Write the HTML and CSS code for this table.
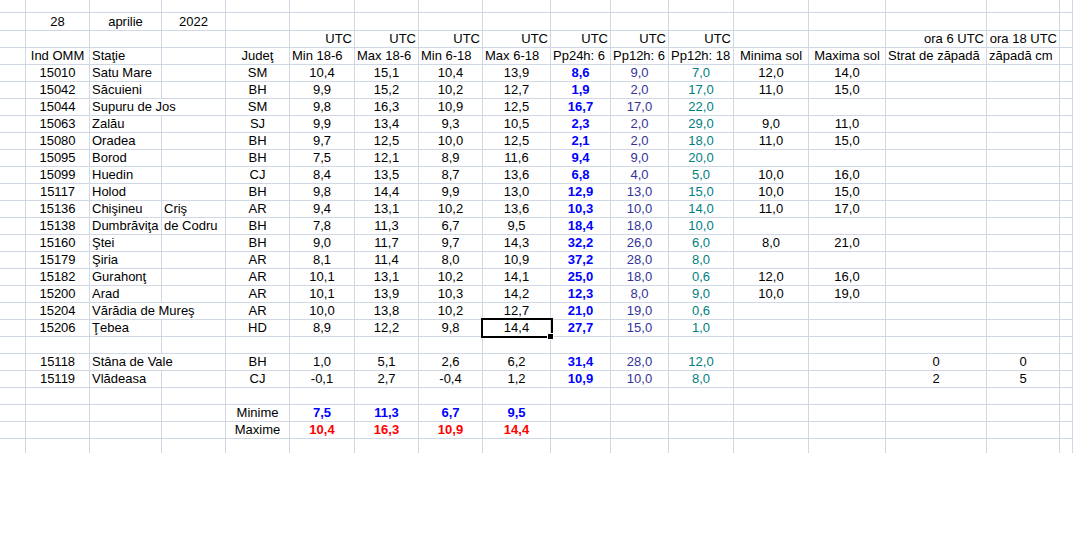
FILE: index.html
```html
<!DOCTYPE html>
<html lang="ro">
<head>
<meta charset="utf-8">
<title>Temperaturi 28 aprilie 2022</title>
<link rel="stylesheet" href="styles.css">
</head>
<body>
<div class="sheet">
  <!-- row 0 -->
  <div class="c"></div><div class="c"></div><div class="c"></div><div class="c"></div><div class="c"></div><div class="c"></div><div class="c"></div><div class="c"></div><div class="c"></div><div class="c"></div><div class="c"></div><div class="c"></div><div class="c"></div><div class="c"></div><div class="c"></div><div class="c"></div><div class="c"></div>
  <!-- row 1 -->
  <div class="c"></div><div class="c">28</div><div class="c">aprilie</div><div class="c">2022</div><div class="c"></div><div class="c"></div><div class="c"></div><div class="c"></div><div class="c"></div><div class="c"></div><div class="c"></div><div class="c"></div><div class="c"></div><div class="c"></div><div class="c"></div><div class="c"></div><div class="c"></div>
  <!-- row 2 -->
  <div class="c"></div><div class="c"></div><div class="c"></div><div class="c"></div><div class="c"></div><div class="c r">UTC</div><div class="c r">UTC</div><div class="c r">UTC</div><div class="c r">UTC</div><div class="c r">UTC</div><div class="c r">UTC</div><div class="c r">UTC</div><div class="c"></div><div class="c"></div><div class="c r">ora 6 UTC</div><div class="c r">ora 18 UTC</div><div class="c"></div>
  <!-- row 3 -->
  <div class="c"></div><div class="c">Ind OMM</div><div class="c l">Staţie</div><div class="c"></div><div class="c">Judeţ</div><div class="c l">Min 18-6</div><div class="c l">Max 18-6</div><div class="c l">Min 6-18</div><div class="c l">Max 6-18</div><div class="c l">Pp24h: 6</div><div class="c l">Pp12h: 6</div><div class="c l">Pp12h: 18</div><div class="c">Minima sol</div><div class="c">Maxima sol</div><div class="c l">Strat de zăpadă</div><div class="c l">zăpadă cm</div><div class="c"></div>
  <!-- 15010 -->
  <div class="c"></div><div class="c">15010</div><div class="c l">Satu Mare</div><div class="c"></div><div class="c">SM</div><div class="c">10,4</div><div class="c">15,1</div><div class="c">10,4</div><div class="c">13,9</div><div class="c b">8,6</div><div class="c p">9,0</div><div class="c t">7,0</div><div class="c">12,0</div><div class="c">14,0</div><div class="c"></div><div class="c"></div><div class="c"></div>
  <!-- 15042 -->
  <div class="c"></div><div class="c">15042</div><div class="c l">Săcuieni</div><div class="c"></div><div class="c">BH</div><div class="c">9,9</div><div class="c">15,2</div><div class="c">10,2</div><div class="c">12,7</div><div class="c b">1,9</div><div class="c p">2,0</div><div class="c t">17,0</div><div class="c">11,0</div><div class="c">15,0</div><div class="c"></div><div class="c"></div><div class="c"></div>
  <!-- 15044 -->
  <div class="c"></div><div class="c">15044</div><div class="c l s2">Supuru de Jos</div><div class="c">SM</div><div class="c">9,8</div><div class="c">16,3</div><div class="c">10,9</div><div class="c">12,5</div><div class="c b">16,7</div><div class="c p">17,0</div><div class="c t">22,0</div><div class="c"></div><div class="c"></div><div class="c"></div><div class="c"></div><div class="c"></div>
  <!-- 15063 -->
  <div class="c"></div><div class="c">15063</div><div class="c l">Zalău</div><div class="c"></div><div class="c">SJ</div><div class="c">9,9</div><div class="c">13,4</div><div class="c">9,3</div><div class="c">10,5</div><div class="c b">2,3</div><div class="c p">2,0</div><div class="c t">29,0</div><div class="c">9,0</div><div class="c">11,0</div><div class="c"></div><div class="c"></div><div class="c"></div>
  <!-- 15080 -->
  <div class="c"></div><div class="c">15080</div><div class="c l">Oradea</div><div class="c"></div><div class="c">BH</div><div class="c">9,7</div><div class="c">12,5</div><div class="c">10,0</div><div class="c">12,5</div><div class="c b">2,1</div><div class="c p">2,0</div><div class="c t">18,0</div><div class="c">11,0</div><div class="c">15,0</div><div class="c"></div><div class="c"></div><div class="c"></div>
  <!-- 15095 -->
  <div class="c"></div><div class="c">15095</div><div class="c l">Borod</div><div class="c"></div><div class="c">BH</div><div class="c">7,5</div><div class="c">12,1</div><div class="c">8,9</div><div class="c">11,6</div><div class="c b">9,4</div><div class="c p">9,0</div><div class="c t">20,0</div><div class="c"></div><div class="c"></div><div class="c"></div><div class="c"></div><div class="c"></div>
  <!-- 15099 -->
  <div class="c"></div><div class="c">15099</div><div class="c l">Huedin</div><div class="c"></div><div class="c">CJ</div><div class="c">8,4</div><div class="c">13,5</div><div class="c">8,7</div><div class="c">13,6</div><div class="c b">6,8</div><div class="c p">4,0</div><div class="c t">5,0</div><div class="c">10,0</div><div class="c">16,0</div><div class="c"></div><div class="c"></div><div class="c"></div>
  <!-- 15117 -->
  <div class="c"></div><div class="c">15117</div><div class="c l">Holod</div><div class="c"></div><div class="c">BH</div><div class="c">9,8</div><div class="c">14,4</div><div class="c">9,9</div><div class="c">13,0</div><div class="c b">12,9</div><div class="c p">13,0</div><div class="c t">15,0</div><div class="c">10,0</div><div class="c">15,0</div><div class="c"></div><div class="c"></div><div class="c"></div>
  <!-- 15136 -->
  <div class="c"></div><div class="c">15136</div><div class="c l">Chişineu</div><div class="c l">Criş</div><div class="c">AR</div><div class="c">9,4</div><div class="c">13,1</div><div class="c">10,2</div><div class="c">13,6</div><div class="c b">10,3</div><div class="c p">10,0</div><div class="c t">14,0</div><div class="c">11,0</div><div class="c">17,0</div><div class="c"></div><div class="c"></div><div class="c"></div>
  <!-- 15138 -->
  <div class="c"></div><div class="c">15138</div><div class="c l">Dumbrăviţa</div><div class="c l">de Codru</div><div class="c">BH</div><div class="c">7,8</div><div class="c">11,3</div><div class="c">6,7</div><div class="c">9,5</div><div class="c b">18,4</div><div class="c p">18,0</div><div class="c t">10,0</div><div class="c"></div><div class="c"></div><div class="c"></div><div class="c"></div><div class="c"></div>
  <!-- 15160 -->
  <div class="c"></div><div class="c">15160</div><div class="c l">Ştei</div><div class="c"></div><div class="c">BH</div><div class="c">9,0</div><div class="c">11,7</div><div class="c">9,7</div><div class="c">14,3</div><div class="c b">32,2</div><div class="c p">26,0</div><div class="c t">6,0</div><div class="c">8,0</div><div class="c">21,0</div><div class="c"></div><div class="c"></div><div class="c"></div>
  <!-- 15179 -->
  <div class="c"></div><div class="c">15179</div><div class="c l">Şiria</div><div class="c"></div><div class="c">AR</div><div class="c">8,1</div><div class="c">11,4</div><div class="c">8,0</div><div class="c">10,9</div><div class="c b">37,2</div><div class="c p">28,0</div><div class="c t">8,0</div><div class="c"></div><div class="c"></div><div class="c"></div><div class="c"></div><div class="c"></div>
  <!-- 15182 -->
  <div class="c"></div><div class="c">15182</div><div class="c l">Gurahonţ</div><div class="c"></div><div class="c">AR</div><div class="c">10,1</div><div class="c">13,1</div><div class="c">10,2</div><div class="c">14,1</div><div class="c b">25,0</div><div class="c p">18,0</div><div class="c t">0,6</div><div class="c">12,0</div><div class="c">16,0</div><div class="c"></div><div class="c"></div><div class="c"></div>
  <!-- 15200 -->
  <div class="c"></div><div class="c">15200</div><div class="c l">Arad</div><div class="c"></div><div class="c">AR</div><div class="c">10,1</div><div class="c">13,9</div><div class="c">10,3</div><div class="c">14,2</div><div class="c b">12,3</div><div class="c p">8,0</div><div class="c t">9,0</div><div class="c">10,0</div><div class="c">19,0</div><div class="c"></div><div class="c"></div><div class="c"></div>
  <!-- 15204 -->
  <div class="c"></div><div class="c">15204</div><div class="c l s2">Vărădia de Mureş</div><div class="c">AR</div><div class="c">10,0</div><div class="c">13,8</div><div class="c">10,2</div><div class="c">12,7</div><div class="c b">21,0</div><div class="c p">19,0</div><div class="c t">0,6</div><div class="c"></div><div class="c"></div><div class="c"></div><div class="c"></div><div class="c"></div>
  <!-- 15206 -->
  <div class="c"></div><div class="c">15206</div><div class="c l">Ţebea</div><div class="c"></div><div class="c">HD</div><div class="c">8,9</div><div class="c">12,2</div><div class="c">9,8</div><div class="c sel">14,4</div><div class="c b">27,7</div><div class="c p">15,0</div><div class="c t">1,0</div><div class="c"></div><div class="c"></div><div class="c"></div><div class="c"></div><div class="c"></div>
  <!-- blank -->
  <div class="c"></div><div class="c"></div><div class="c"></div><div class="c"></div><div class="c"></div><div class="c"></div><div class="c"></div><div class="c"></div><div class="c"></div><div class="c"></div><div class="c"></div><div class="c"></div><div class="c"></div><div class="c"></div><div class="c"></div><div class="c"></div><div class="c"></div>
  <!-- 15118 -->
  <div class="c"></div><div class="c">15118</div><div class="c l s2">Stâna de Vale</div><div class="c">BH</div><div class="c">1,0</div><div class="c">5,1</div><div class="c">2,6</div><div class="c">6,2</div><div class="c b">31,4</div><div class="c p">28,0</div><div class="c t">12,0</div><div class="c"></div><div class="c"></div><div class="c">0</div><div class="c">0</div><div class="c"></div>
  <!-- 15119 -->
  <div class="c"></div><div class="c">15119</div><div class="c l">Vlădeasa</div><div class="c"></div><div class="c">CJ</div><div class="c">-0,1</div><div class="c">2,7</div><div class="c">-0,4</div><div class="c">1,2</div><div class="c b">10,9</div><div class="c p">10,0</div><div class="c t">8,0</div><div class="c"></div><div class="c"></div><div class="c">2</div><div class="c">5</div><div class="c"></div>
  <!-- blank -->
  <div class="c"></div><div class="c"></div><div class="c"></div><div class="c"></div><div class="c"></div><div class="c"></div><div class="c"></div><div class="c"></div><div class="c"></div><div class="c"></div><div class="c"></div><div class="c"></div><div class="c"></div><div class="c"></div><div class="c"></div><div class="c"></div><div class="c"></div>
  <!-- Minime -->
  <div class="c"></div><div class="c"></div><div class="c"></div><div class="c"></div><div class="c">Minime</div><div class="c mn">7,5</div><div class="c mn">11,3</div><div class="c mn">6,7</div><div class="c mn">9,5</div><div class="c"></div><div class="c"></div><div class="c"></div><div class="c"></div><div class="c"></div><div class="c"></div><div class="c"></div><div class="c"></div>
  <!-- Maxime -->
  <div class="c"></div><div class="c"></div><div class="c"></div><div class="c"></div><div class="c">Maxime</div><div class="c mx">10,4</div><div class="c mx">16,3</div><div class="c mx">10,9</div><div class="c mx">14,4</div><div class="c"></div><div class="c"></div><div class="c"></div><div class="c"></div><div class="c"></div><div class="c"></div><div class="c"></div><div class="c"></div>
  <!-- partial last row -->
  <div class="c"></div><div class="c"></div><div class="c"></div><div class="c"></div><div class="c"></div><div class="c"></div><div class="c"></div><div class="c"></div><div class="c"></div><div class="c"></div><div class="c"></div><div class="c"></div><div class="c"></div><div class="c"></div><div class="c"></div><div class="c"></div><div class="c"></div>
</div>
</body>
</html>
```

FILE: styles.css
```css
html, body {
  margin: 0;
  padding: 0;
  background: #ffffff;
}

body {
  font-family: "Liberation Sans", Arial, sans-serif;
  font-size: 13px;
  color: #000000;
}

.sheet {
  display: grid;
  grid-template-columns: 26px 64px 72px 64px 64px 65px 64px 64px 68px 60px 58px 65px 75px 77px 101px 73px 1fr;
  grid-template-rows: 13px 18px repeat(25, 17px);
  width: 1073px;
  height: 453px;
  overflow: hidden;
}

.c {
  box-sizing: border-box;
  border-right: 1px solid #d0d7e5;
  border-bottom: 1px solid #d0d7e5;
  padding: 0 2px;
  display: flex;
  align-items: flex-end;
  justify-content: center;
  line-height: 16px;
  white-space: nowrap;
  min-width: 0;
}

.l { justify-content: flex-start; }
.r { justify-content: flex-end; }
.s2 { grid-column: span 2; }

.b { color: #0000ff; font-weight: bold; }
.p { color: #333399; }
.t { color: #008080; }
.mn { color: #0000ff; font-weight: bold; }
.mx { color: #ff0000; font-weight: bold; }

.sel { position: relative; }
.sel::before {
  content: "";
  position: absolute;
  left: -2px;
  top: -2px;
  width: 72px;
  height: 20px;
  box-sizing: border-box;
  border: 2px solid #000000;
  z-index: 1;
}
.sel::after {
  content: "";
  position: absolute;
  right: -3px;
  bottom: -3px;
  width: 5px;
  height: 5px;
  background: #000000;
  outline: 1px solid #ffffff;
  z-index: 2;
}
```
